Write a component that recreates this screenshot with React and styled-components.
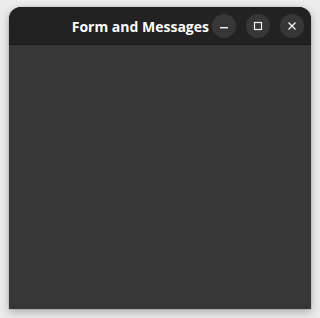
import React from "react";
import styled, { createGlobalStyle } from "styled-components";

const Global = createGlobalStyle`
  html, body {
    margin: 0;
    padding: 0;
    background: #ebebeb;
  }
`;

function App() {
  return (
    <Page>
      <Global />
      <Window>
        <TitleBar>
          <Title>Form and Messages</Title>
          <Controls>
            <CtrlButton aria-label="minimize">
              <svg width="10" height="10" viewBox="0 0 10 10">
                <rect x="1" y="6" width="8" height="1.4" fill="#f2f2f2" />
              </svg>
            </CtrlButton>
            <CtrlButton aria-label="maximize">
              <svg width="10" height="10" viewBox="0 0 10 10">
                <rect x="1.5" y="1.5" width="7" height="7" fill="none" stroke="#f2f2f2" strokeWidth="1.2" />
              </svg>
            </CtrlButton>
            <CtrlButton aria-label="close">
              <svg width="10" height="10" viewBox="0 0 10 10">
                <path d="M1.5 1.5 L8.5 8.5 M8.5 1.5 L1.5 8.5" stroke="#f2f2f2" strokeWidth="1.3" />
              </svg>
            </CtrlButton>
          </Controls>
        </TitleBar>
        <Content />
      </Window>
    </Page>
  );
}

export default App;

const Page = styled.div`
  width: 320px;
  height: 318px;
  box-sizing: border-box;
  padding: 7px 9px 9px;
  display: flex;
`;

const Window = styled.div`
  flex: 1;
  display: flex;
  flex-direction: column;
  border-radius: 12px 12px 0 0;
  overflow: hidden;
  background: #373737;
  box-shadow: 0 3px 9px rgba(0, 0, 0, 0.28), 0 0 0 1px rgba(0, 0, 0, 0.06);
`;

const TitleBar = styled.div`
  height: 37px;
  flex-shrink: 0;
  background: #222222;
  border-bottom: 1px solid #1b1b1b;
  display: flex;
  align-items: center;
  justify-content: flex-end;
  padding-right: 7px;
`;

const Title = styled.div`
  font-family: "Open Sans", "Noto Sans", sans-serif;
  font-weight: 700;
  font-size: 14px;
  color: #ffffff;
  margin-right: 3px;
  margin-top: 1px;
  white-space: nowrap;
`;

const Controls = styled.div`
  display: flex;
  gap: 10px;
  align-items: center;
  margin-top: 1px;
`;

const CtrlButton = styled.div`
  width: 24px;
  height: 24px;
  border-radius: 50%;
  background: #373737;
  display: flex;
  align-items: center;
  justify-content: center;
`;

const Content = styled.div`
  flex: 1;
  background: #373737;
`;
